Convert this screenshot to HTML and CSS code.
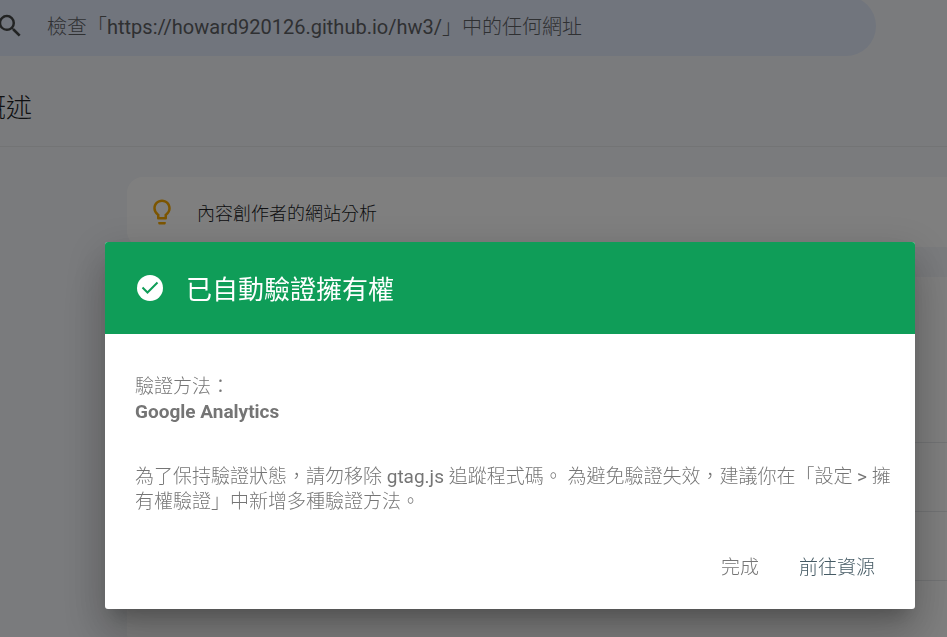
FILE: index.html
```html
<!DOCTYPE html>
<html lang="zh-Hant">
<head>
<meta charset="utf-8">
<title>概述</title>
<link rel="stylesheet" href="styles.css">
</head>
<body>
<div class="page">
  <header class="topbar">
    <form class="search">
      <svg class="search-icon" viewBox="0 0 24 24" aria-hidden="true"><path d="M15.5 14h-.79l-.28-.27A6.47 6.47 0 0 0 16 9.5 6.5 6.5 0 1 0 9.5 16c1.61 0 3.09-.59 4.23-1.57l.27.28v.79l5 4.99L20.49 19l-4.99-5zm-6 0C7.01 14 5 11.99 5 9.5S7.01 5 9.5 5 14 7.01 14 9.5 11.99 14 9.5 14z"/></svg>
      <input class="search-input" type="text" aria-label="檢查網址" placeholder="檢查「https://howard920126.github.io/hw3/」中的任何網址">
    </form>
  </header>
  <h1 class="heading">概述</h1>
  <main class="content">
    <section class="card insight">
      <svg class="bulb" viewBox="0 0 24 24" aria-hidden="true"><path d="M9 21c0 .55.45 1 1 1h4c.55 0 1-.45 1-1v-1H9v1zm3-19C8.14 2 5 5.14 5 9c0 2.38 1.19 4.47 3 5.74V17c0 .55.45 1 1 1h6c.55 0 1-.45 1-1v-2.26c1.81-1.27 3-3.36 3-5.74 0-3.86-3.14-7-7-7zm2.85 11.1-.85.6V16h-4v-2.3l-.85-.6A4.997 4.997 0 0 1 7 9c0-2.76 2.24-5 5-5s5 2.24 5 5c0 1.63-.8 3.16-2.15 4.1z"/></svg>
      <span>內容創作者的網站分析</span>
    </section>
    <section class="card list">
      <div class="list-head"></div>
      <div class="row"></div>
      <div class="row"></div>
      <div class="row"></div>
    </section>
  </main>
</div>
<div class="overlay">
  <div class="dialog" role="dialog" aria-labelledby="dialog-title">
    <div class="banner">
      <svg class="check" viewBox="0 0 26 26" aria-hidden="true"><circle cx="13" cy="13" r="13" fill="#fff"/><path d="M5.500 12.500l5 5L20.500 7.500" fill="none" stroke="#0f9d58" stroke-width="2"/></svg>
      <h2 class="title" id="dialog-title">已自動驗證擁有權</h2>
    </div>
    <div class="body">
      <p class="text">驗證方法：<br><strong>Google Analytics</strong></p>
      <p class="text">為了保持驗證狀態，請勿移除 gtag.js 追蹤程式碼。 為避免驗證失效，建議你在「設定 &gt; 擁有權驗證」中新增多種驗證方法。</p>
    </div>
    <div class="actions">
      <button class="button" type="button">完成</button>
      <button class="button primary" type="button">前往資源</button>
    </div>
  </div>
</div>
</body>
</html>
```
FILE: styles.css
```css
* { box-sizing: border-box; }
body {
  margin: 0;
  height: 100vh;
  overflow: hidden;
  background: #f5f7fa;
  font-family: Roboto, "Noto Sans CJK TC Light", "Noto Sans CJK TC", sans-serif;
  font-weight: 400;
}
.page { height: 100vh; overflow: hidden; }
.topbar { padding-right: 71px; }
.search {
  display: flex;
  align-items: center;
  gap: 22px;
  height: 60px;
  margin: -4px 0 0 -40px;
  padding-left: 35px;
  border-radius: 30px;
  background: #e2eafb;
}
.search-icon { width: 30px; height: 30px; flex: none; fill: #444746; }
.search-input {
  flex: 1;
  min-width: 0;
  padding: 2px 0 0;
  border: 0;
  outline: 0;
  background: none;
  font: inherit;
  font-size: 20px;
}
.search-input::placeholder { color: #5f6164; opacity: 1; }
.heading {
  height: 91px;
  margin: 0;
  padding-top: 33px;
  border-bottom: 1px solid #e6e8eb;
  color: #202124;
  font-size: 26px;
  line-height: 38px;
  font-weight: 400;
  text-indent: -20px;
}
.content {
  display: flex;
  flex-direction: column;
  gap: 30px;
  padding: 30px 0 0 127px;
}
.card { background: #fff; border-radius: 16px 0 0 16px; }
.insight {
  display: flex;
  align-items: center;
  gap: 20px;
  height: 70px;
  padding-left: 20px;
  font-size: 18px;
  color: #202124;
}
.bulb { width: 30px; height: 30px; fill: #f9ab00; }
.list-head { height: 165px; }
.row { height: 69px; border-top: 1px solid #e6e8eb; }
.overlay {
  position: fixed;
  inset: 0;
  padding: 242px 32px 28px 105px;
  background: rgba(0, 0, 0, 0.5);
}
.dialog {
  background: #fff;
  border-radius: 3px;
  box-shadow: 0 14px 18px -8px rgba(0, 0, 0, 0.2), 0 30px 48px 4px rgba(0, 0, 0, 0.14), 0 12px 40px 8px rgba(0, 0, 0, 0.12);
}
.banner {
  display: flex;
  align-items: center;
  gap: 23px;
  height: 92px;
  padding: 0 32px;
  border-radius: 3px 3px 0 0;
  background: #0f9d58;
  color: #fff;
}
.check { width: 26px; height: 26px; }
.title {
  margin: 0;
  padding-top: 4px;
  font-family: Roboto, "Noto Sans CJK TC", sans-serif;
  font-size: 26px;
  line-height: 36px;
  font-weight: 400;
}
.body { padding: 40px 22px 0 30px; }
.text {
  margin: 0 0 40px;
  color: #757575;
  font-size: 19px;
  line-height: 25px;
}
.text:last-child { margin-bottom: 28px; }
strong { font-weight: 700; }
.actions {
  display: flex;
  justify-content: flex-end;
  gap: 8px;
  padding: 0 24px 21px;
}
.button {
  height: 46px;
  padding: 0 16px;
  border: 0;
  background: none;
  color: #757575;
  font: inherit;
  font-size: 19px;
}
.primary { color: #455a64; }
```
